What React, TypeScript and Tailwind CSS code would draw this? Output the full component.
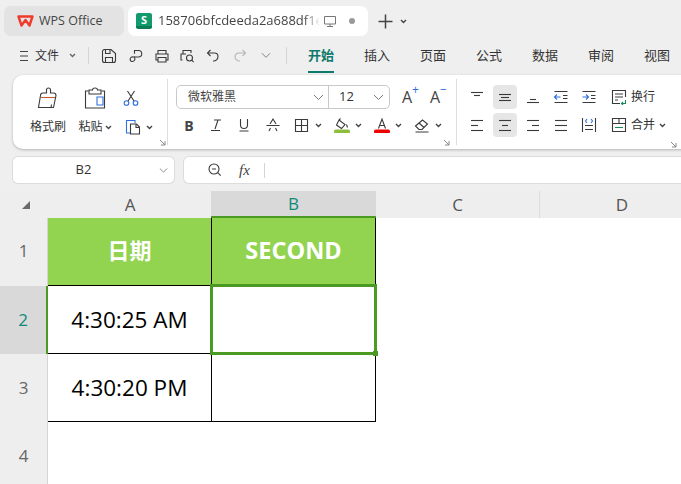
import React from "react";

const S = ({ w = 16, h = 16, children, className = "" }: { w?: number; h?: number; children: React.ReactNode; className?: string }) => (
  <svg width={w} height={h} viewBox={`0 0 ${w} ${h}`} fill="none" stroke="#3a3a3a" strokeWidth={1.1} className={"shrink-0 " + className}>
    {children}
  </svg>
);

const Caret = ({ w = 7, color = "#444", sw = 1.4 }: { w?: number; color?: string; sw?: number }) => (
  <svg width={w} height={5} viewBox="0 0 7 5" fill="none" stroke={color} strokeWidth={sw} className="shrink-0">
    <path d="M1 1l2.5 2.5L6 1" />
  </svg>
);

const Chevron = ({ w = 11 }: { w?: number }) => (
  <svg width={w} height={7} viewBox="0 0 11 7" fill="none" stroke="#777" strokeWidth={1} className="shrink-0">
    <path d="M1 1l4.5 4.5L10 1" />
  </svg>
);

const Launcher = () => (
  <svg width={7} height={7} viewBox="0 0 7 7" fill="none" stroke="#888" strokeWidth={1}>
    <path d="M1 1l5 5M6 2v4H2" />
  </svg>
);

const Lines = ({ rows }: { rows: [number, number, number][] }) => (
  <S>
    {rows.map(([x1, x2, y], i) => (
      <path key={i} d={`M${x1} ${y}.5H${x2}`} />
    ))}
  </S>
);

const Btn = ({ active, children }: { active?: boolean; children: React.ReactNode }) => (
  <div className={"w-[24px] h-[24px] rounded-[4px] flex items-center justify-center " + (active ? "bg-[#e6e6e6]" : "")}>{children}</div>
);

const Tool = ({ w, className = "", children }: { w: number; className?: string; children: React.ReactNode }) => (
  <div className={"flex items-center justify-center h-[24px] shrink-0 " + className} style={{ width: w }}>{children}</div>
);

const QuickIcons = () => (
  <>
    <Tool w={26}>
      <S><path d="M1.500 3.500a2 2 0 012-2h6.500l4.500 4v7a2 2 0 01-2 2h-9a2 2 0 01-2-2z" /><path d="M4.500 1.500v4h4.500v-4M4.500 14.500v-5h7v5" /></S>
    </Tool>
    <Tool w={27}>
      <S><path d="M6 9h4.500a3.200 3.200 0 000-6.500H6.500v3.200" /><path d="M6.500 9.500a2.600 2.600 0 01-2.500 4 2.200 2.200 0 01-1.800-2.400A2.200 2.200 0 015 9h2" /></S>
    </Tool>
    <Tool w={25}>
      <S><path d="M4 6V2.500h8V6M4 12H2V6h12v6h-2" /><path d="M4 9.500h8v4.500H4z" /></S>
    </Tool>
    <Tool w={26}>
      <S><path d="M4 6V2.500h8V5M3.500 12H2V6h5" /><circle cx="10.500" cy="10" r="3" /><path d="M12.700 12.200l2 2" /></S>
    </Tool>
    <Tool w={26}>
      <S><path d="M5.500 2L2.500 5l3 3" /><path d="M3 5h6.500a3.500 3.500 0 013.500 3.500A4.500 4.500 0 018 13" /></S>
    </Tool>
    <Tool w={27}>
      <S><g stroke="#b5b5b5"><path d="M10.500 2l3 3-3 3" /><path d="M13 5H6.500A3.500 3.500 0 003 8.500 4.500 4.500 0 008 13" /></g></S>
    </Tool>
    <Tool w={25}>
      <Chevron w={10} />
    </Tool>
  </>
);

const tabs = ["插入", "页面", "公式", "数据", "审阅", "视图"];

const Ribbon = () => (
  <div className="relative ml-[13px] w-[700px] h-[74px] shrink-0 bg-white rounded-l-[10px] shadow-[0_1px_3px_rgba(0,0,0,0.25)] flex text-[12px] text-[#333]">
    {/* Clipboard */}
    <div className="relative w-[154px] shrink-0 flex pl-[16px] pt-[10px]">
      <div className="w-[38px] flex flex-col items-center">
        <div className="h-[25px] flex items-center">
          <S w={22} h={22}>
            <path d="M9.500 6V3a2 2 0 014 0v3h3a2.500 2.500 0 012.500 2.500L16.500 20.500H1.500L3.500 8.500A2.500 2.500 0 016 6z" />
            <path d="M4 10.500h14" stroke="#c0602a" />
            <path d="M14 20.500l0.500-3" />
          </S>
        </div>
        <span className="mt-[9px] leading-[16px] whitespace-nowrap">格式刷</span>
      </div>
      <div className="w-[50px] ml-[3px] flex flex-col items-center">
        <div className="h-[25px] flex items-center">
          <S w={22} h={22}>
            <path d="M4.500 4H1.500V21H20.500V8M17.500 4h3v4" />
            <path d="M5 7V3h3.500a2.500 2 0 015 0H17v4z" />
            <path d="M13 10h6v8h-6z" stroke="#2f6fe0" />
          </S>
        </div>
        <span className="mt-[9px] leading-[16px] whitespace-nowrap flex items-center gap-[2px]">粘贴<Caret /></span>
      </div>
      <div className="-ml-[1px] flex flex-col">
        <div className="h-[25px] w-[24px] flex items-center justify-center">
          <S>
            <g stroke="#2f6fe0"><circle cx="3.500" cy="13" r="2.300" /><circle cx="12.500" cy="13" r="2.300" /></g>
            <path d="M5 11L11.500 1M11 11L4.500 1" />
          </S>
        </div>
        <div className="mt-[9px] h-[16px] flex items-center gap-[5px] ml-[6px]">
          <S>
            <path d="M5 14H1.500V1.500H10V4" stroke="#2f6fe0" />
            <path d="M5.500 5h6l3 3v7h-9z" />
            <path d="M11 5v3.500h3.500" />
          </S>
          <Caret />
        </div>
      </div>
      <div className="absolute right-[1px] bottom-[3px]"><Launcher /></div>
    </div>
    <div className="w-px h-[66px] mt-[4px] bg-[#dedede] shrink-0" />

    {/* Font */}
    <div className="relative w-[288px] shrink-0 pl-[8px] pt-[10px]">
      <div className="flex items-center h-[24px]">
        <div className="w-[214px] h-[24px] rounded-[5px] border border-[#c9c9c9] flex">
          <div className="w-[152px] flex items-center justify-between pl-[11px] pr-[4px] border-r border-[#c9c9c9]">
            <span className="whitespace-nowrap text-[#444]">微软雅黑</span>
            <Chevron />
          </div>
          <div className="flex-1 flex items-center justify-between pl-[10px] pr-[5px]">
            <span className="text-[13px] text-[#333]">12</span>
            <Chevron />
          </div>
        </div>
        <div className="w-[26px] ml-[12px] text-[16px] text-[#444] relative leading-none">A<span className="absolute -top-[5px] left-[10px] text-[12px] text-[#2f6fe0]">+</span></div>
        <div className="w-[26px] ml-[2px] text-[16px] text-[#444] relative leading-none">A<span className="absolute -top-[5px] left-[10px] text-[12px] text-[#2f6fe0]">−</span></div>
      </div>
      <div className="flex items-center h-[24px] mt-[4px] ml-[1px]">
        <Tool w={24}><span className="font-bold text-[14px] text-[#444]">B</span></Tool>
        <Tool w={29}>
          <S><path d="M6 3h7M10 3L7 12M3 13.500h9" /></S>
        </Tool>
        <Tool w={28}>
          <S><path d="M4.500 2v6a3.500 3.500 0 007 0V2M3.500 14h9" /></S>
        </Tool>
        <Tool w={29}>
          <S><path d="M5 7l3-5 3 5M1.500 8.500h13M4 14l1.500-3M12 14l-1.500-3" /></S>
        </Tool>
        <Tool w={28}>
          <S><path d="M2.500 2.500h12v12h-12zM8.500 2.500v12M2.500 8.500h12" /></S>
        </Tool>
        <Caret />
        <Tool w={26} className="ml-[7px]">
          <svg width={16} height={16} viewBox="0 0 16 16" fill="none" stroke="#3a3a3a" strokeWidth={1.1}>
            <path d="M5 3l6 4.500-3.500 4L2.500 8zM6.500 1.500L5 3M12.500 7.500l1 3" />
            <rect x="0.500" y="13" width="15" height="3" rx="1.500" fill="#8ebd3e" stroke="#8ebd3e" />
          </svg>
        </Tool>
        <Caret />
        <Tool w={26} className="ml-[7px]">
          <svg width={16} height={16} viewBox="0 0 16 16" fill="none" stroke="#3a3a3a" strokeWidth={1.1}>
            <path d="M4.500 11.500L8 2l3.500 9.500M5.500 8.500h5" />
            <rect x="0.500" y="13" width="15" height="3" rx="1.500" fill="#ee0000" stroke="#ee0000" />
          </svg>
        </Tool>
        <Caret />
        <Tool w={26} className="ml-[7px]">
          <S><path d="M1.500 9L8.500 3l5 4-5.500 5.500H5z" /><path d="M5 6l5 4.500M1.500 15h13" /></S>
        </Tool>
        <Caret />
      </div>
      <div className="absolute right-[6px] bottom-[3px]"><Launcher /></div>
    </div>
    <div className="w-px h-[66px] mt-[4px] bg-[#dedede] shrink-0" />

    {/* Alignment */}
    <div className="w-[230px] shrink-0 pl-[8px] pt-[10px] flex flex-col gap-[4px]">
      <div className="flex items-center h-[24px] gap-[4px]">
        <Btn><Lines rows={[[2, 14, 3], [5, 11, 6]]} /></Btn>
        <Btn active><Lines rows={[[2, 14, 5], [4, 12, 8], [2, 14, 11]]} /></Btn>
        <Btn><Lines rows={[[5, 11, 10], [2, 14, 13]]} /></Btn>
        <Btn>
          <S>
            <path d="M1.500 2.500h13M1.500 13.500h13M10 6.500h4.500M10 9.500h4.500" />
            <path d="M7.500 8H1.800M4 5.500L1.500 8 4 10.500" stroke="#2f6fe0" />
          </S>
        </Btn>
        <Btn>
          <S>
            <path d="M1.500 2.500h13M1.500 13.500h13M10 6.500h4.500M10 9.500h4.500" />
            <path d="M1.500 8h5.700M5 5.500L7.500 8 5 10.500" stroke="#2f6fe0" />
          </S>
        </Btn>
        <div className="ml-[6px] flex items-center gap-[4px] whitespace-nowrap">
          <S>
            <path d="M14.500 8V1.500h-13v13H9" />
            <path d="M4 5h8M4 8h8M4 11h3" />
            <path d="M14.500 11v3.500H10.500M12 13l-1.500 1.500L12 16" stroke="#1d8a5a" />
          </S>
          <span>换行</span>
        </div>
      </div>
      <div className="flex items-center h-[24px] gap-[4px]">
        <Btn><Lines rows={[[2, 14, 3], [2, 9, 8], [2, 14, 13]]} /></Btn>
        <Btn active><Lines rows={[[2, 14, 3], [5, 11, 8], [2, 14, 13]]} /></Btn>
        <Btn><Lines rows={[[2, 14, 3], [7, 14, 8], [2, 14, 13]]} /></Btn>
        <Btn><Lines rows={[[2, 14, 3], [2, 14, 8], [2, 14, 13]]} /></Btn>
        <Btn>
          <S>
            <path d="M1.500 1v14M14.500 1v14M4 8.500h8M4 12.500h8" />
            <path d="M6 2L4.500 4 6 6M10 2l1.500 2L10 6" stroke="#2f6fe0" />
          </S>
        </Btn>
        <div className="ml-[6px] flex items-center gap-[4px] whitespace-nowrap">
          <S>
            <path d="M1.500 1.500h13v13h-13zM1.500 6.500h13M8 1.500v5" />
            <path d="M4 10.500h8" stroke="#1d8a5a" />
          </S>
          <span>合并</span>
          <Caret />
        </div>
      </div>
    </div>
    <div className="absolute left-[657px] top-[66px]"><Launcher /></div>
  </div>
);

const colHead = "flex items-center justify-center text-[17px] text-[#555] bg-[#eeeeee]";
const rowHead = "flex items-center justify-center text-[17px] text-[#666] bg-[#eeeeee] border-r border-[#d5d5d5]";
const cell = "flex items-center justify-center border-r border-b border-black bg-white text-[22.5px] text-black";
const headCell = "flex items-center justify-center pb-[2px] border-r border-b border-black bg-[#92d350] font-bold text-white";

export default function App() {
  return (
    <div className="relative w-[681px] h-[484px] overflow-hidden bg-[#efefef] flex flex-col font-['Open_Sans','Noto_Sans_CJK_SC',sans-serif]">
      {/* Title tabs */}
      <div className="h-[36px] pt-[6px] pl-[4px] flex gap-[4px] shrink-0">
        <div className="w-[120px] h-[30px] rounded-[7px] bg-[#e3e3e3] flex items-center pl-[13px] gap-[5px]">
          <svg width={17} height={12} viewBox="0 0 17 12" fill="none" stroke="#ee3b2b" strokeWidth={2.4} strokeLinejoin="round">
            <path d="M1.500 1.500h14L12.500 10.500 8.500 5 4.500 10.500z" />
          </svg>
          <span className="text-[12.5px] text-[#444]">WPS Office</span>
        </div>
        <div className="w-[240px] h-[30px] rounded-[7px] bg-white flex items-center pl-[8px] overflow-hidden">
          <div className="w-[16px] h-[16px] rounded-[2px] bg-[#129a6e] border-b-[3px] border-[#0a7d57] flex items-center justify-center text-white text-[11px] font-bold leading-none shrink-0">S</div>
          <span className="ml-[6px] w-[162px] overflow-hidden whitespace-nowrap text-[13px] text-[#444] [mask-image:linear-gradient(to_right,black_90%,transparent)]">158706bfcdeeda2a688df1ec9a</span>
          <S className="ml-[3px]" w={14} h={14}><g stroke="#777" strokeWidth={1}><path d="M1.500 2.500h11v7.500h-11zM7 10v2M4 12.500h6" /></g></S>
          <div className="ml-[12px] w-[6px] h-[6px] rounded-full bg-[#999]" />
        </div>
        <div className="ml-[6px] flex items-center gap-[7px]">
          <svg width={15} height={15} viewBox="0 0 15 15" stroke="#444" strokeWidth={1.5}><path d="M7.500 0.500v14M0.500 7.500h14" /></svg>
          <Caret />
        </div>
      </div>

      {/* Menu row */}
      <div className="h-[39px] shrink-0 flex items-center pl-[20px] text-[13px] text-[#333]">
        <svg width={8} height={12} viewBox="0 0 8 12" stroke="#444" strokeWidth={1.1}><path d="M0 1.500h8M0 6h8M0 10.500h8" /></svg>
        <span className="ml-[8px] -translate-x-px text-[12px] w-[26px] whitespace-nowrap">文件</span>
        <span className="ml-[7px]"><Caret color="#666" /></span>
        <div className="w-px h-[17px] bg-[#d5d5d5] ml-[12px]" />
        <div className="ml-[7px] flex items-center"><QuickIcons /></div>
        <div className="w-px h-[17px] bg-[#d5d5d5] ml-[8px]" />
        <div className="ml-[21px] w-[26px] h-[39px] relative flex items-center justify-center">
          <span className="font-bold text-[#0f7a6c] whitespace-nowrap">开始</span>
          <div className="absolute bottom-[2px] left-0 right-0 h-[2px] bg-[#0f7a6c]" />
        </div>
        {tabs.map((t) => (
          <span key={t} className="ml-[30px] w-[26px] whitespace-nowrap">{t}</span>
        ))}
      </div>

      <Ribbon />

      {/* Formula row */}
      <div className="mt-[8px] h-[26px] shrink-0 flex pl-[13px] gap-[10px]">
        <div className="w-[161px] h-[26px] rounded-[5px] bg-white shadow-[0_0_0_1px_#dcdcdc] flex items-center">
          <span className="w-[141px] text-center text-[13px] text-[#333]">B2</span>
          <span className="ml-[5px]"><Chevron w={9} /></span>
        </div>
        <div className="flex-1 h-[26px] rounded-l-[5px] bg-white shadow-[0_0_0_1px_#dcdcdc] flex items-center pl-[23px]">
          <S><circle cx="7" cy="7" r="5" /><path d="M5 7h4M10.700 10.700l3 3" /></S>
          <span className="ml-[16px] font-['Liberation_Serif',serif] italic text-[15px] text-[#444]">fx</span>
          <div className="ml-[14px] w-px h-[15px] bg-[#d5d5d5]" />
        </div>
      </div>

      {/* Sheet */}
      <div className="relative mt-[8px] grid grid-cols-[48px_164px_164px_164px_164px] grid-rows-[27px_68px_68px_68px_68px] bg-white flex-1">
        <div className="flex items-center justify-center bg-[#eeeeee]">
          <svg width={8} height={8} viewBox="0 0 8 8" fill="#6a6a6a" className="ml-[4px]"><path d="M8 0v8H0z" /></svg>
        </div>
        <div className={colHead}>A</div>
        <div className="-ml-px flex items-center justify-center text-[17px] text-[#0f8a7a] bg-[#d9d9d9] border-b-2 border-[#4a9a24]">B</div>
        <div className={colHead + " border-r border-[#dcdcdc]"}>C</div>
        <div className={colHead}>D</div>

        <div className={rowHead + " pb-[2px]"}>1</div>
        <div className={headCell + " text-[22px]"}>日期</div>
        <div className={headCell + " text-[23.5px]"}>SECOND</div>
        <div /><div />

        <div className="flex items-center justify-center text-[17px] text-[#0f8a7a] bg-[#d9d9d9] border-r-2 border-[#4a9a24]">2</div>
        <div className={cell}>4:30:25 AM</div>
        <div className={cell} />
        <div /><div />

        <div className={rowHead}>3</div>
        <div className={cell}>4:30:20 PM</div>
        <div className={cell} />
        <div /><div />

        <div className={rowHead}>4</div>
        <div /><div /><div /><div />

        {/* Selection box */}
        <div className="absolute left-[210px] top-[93px] w-[167px] h-[71px] border-[3px] border-[#4a9a24]" />
        <div className="absolute left-[373px] top-[160px] w-[5px] h-[5px] bg-[#4a9a24]" />
      </div>
    </div>
  );
}
